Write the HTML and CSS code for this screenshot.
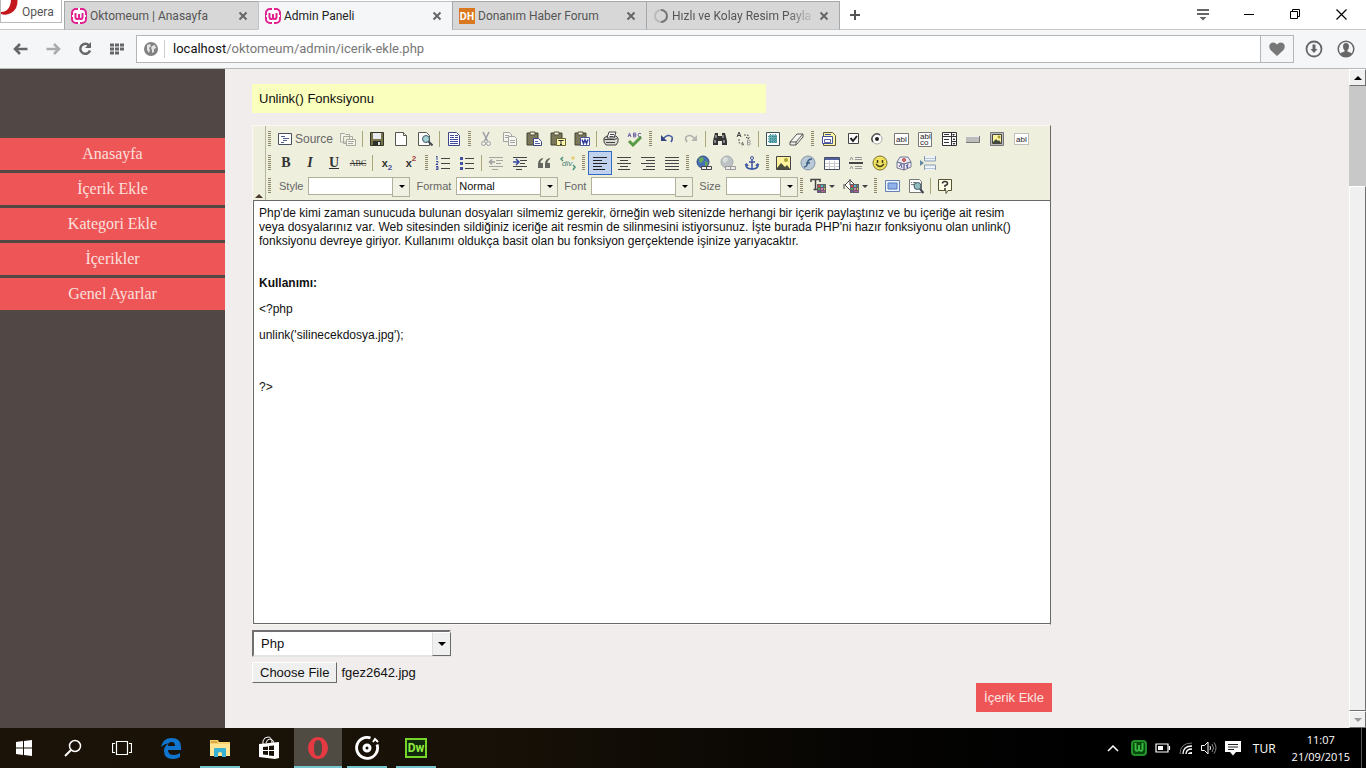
FILE: index.html
```html
<!DOCTYPE html>
<html lang="tr">
<head>
<meta charset="utf-8">
<title>Admin Paneli</title>
<link rel="stylesheet" href="styles.css">
</head>
<body>
<svg class="defs" aria-hidden="true">
  <symbol id="wamp" viewBox="0 0 16 16"><rect x="1" y="1" width="14" height="14" rx="4" fill="#fff" stroke="#e0218f" stroke-width="2"/><path d="M4.500 5v4q0 2 1.500 2h.5Q8 11 8 9V6v3q0 2 1.500 2h.5q1.500 0 1.500-2V5" fill="none" stroke="#e0218f" stroke-width="2"/><path d="M7 1h2M7 15h2M1 8h1M14 8h1" stroke="#fff" stroke-width="2"/></symbol>
  <symbol id="close" viewBox="0 0 10 10"><path d="M1.500 1.500l7 7M8.500 1.500l-7 7" stroke="#666" stroke-width="2"/></symbol>
  <symbol id="clip" viewBox="0 0 16 16"><path d="M1 2h11v12H1z" fill="#7b775a" stroke="#44432f"/><path d="M4 1h5v3H4z" fill="#eeeed8" stroke="#55533f"/></symbol>
  <symbol id="swatch" viewBox="0 0 9 9"><path d="M0 0h9v9H0z" fill="#63606c"/><path d="M1 1h2v2H1z" fill="#d84b42"/><path d="M4 1h2v2H4z" fill="#55b5c5"/><path d="M7 1h1v2H7zM1 4h2v2H1z" fill="#51a55b"/><path d="M4 4h2v2H4z" fill="#dc78aa"/><path d="M7 4h1v2H7z" fill="#ddc14c"/><path d="M1 7h2v1H1z" fill="#724eaa"/><path d="M4 7h4v1H4z" fill="#b05e98"/></symbol>
</svg>

<header class="browser">
  <div class="tabstrip">
    <button class="opera-menu"><svg width="18" height="16" viewBox="0 0 18 16"><path d="M10 0h6.500Q17 9 10 13Q5 16 0 14V12Q9 12 10 0z" fill="#c4161c"/></svg><span>Opera</span></button>
    <nav class="tabs">
      <div class="tab"><svg width="16" height="16"><use href="#wamp"/></svg><span class="tab-title">Oktomeum | Anasayfa</span><button aria-label="Kapat"><svg width="10" height="10"><use href="#close"/></svg></button></div>
      <div class="tab active"><svg width="16" height="16"><use href="#wamp"/></svg><span class="tab-title">Admin Paneli</span><button aria-label="Kapat"><svg width="10" height="10"><use href="#close"/></svg></button></div>
      <div class="tab"><span class="dh">DH</span><span class="tab-title">Donanım Haber Forum</span><button aria-label="Kapat"><svg width="10" height="10"><use href="#close"/></svg></button></div>
      <div class="tab"><svg width="16" height="16" viewBox="0 0 16 16"><circle cx="8" cy="8" r="6" fill="none" stroke="#bbb" stroke-width="2"/><path d="M8 2A6 6 0 0 1 8 14" fill="none" stroke="#777" stroke-width="2"/></svg><span class="tab-title fade">Hızlı ve Kolay Resim Payla</span><button aria-label="Kapat"><svg width="10" height="10"><use href="#close"/></svg></button></div>
    </nav>
    <button class="new-tab" aria-label="Yeni sekme"><svg width="12" height="12" viewBox="0 0 12 12"><path d="M6 1v10M1 6h10" stroke="#555" stroke-width="2"/></svg></button>
    <div class="window-controls">
      <button aria-label="Sekme menüsü"><svg width="14" height="14" viewBox="0 0 14 14"><path d="M1 3h12M1 7h12" stroke="#666" stroke-width="2"/><path d="M3.500 10h7L7 13.500z" fill="#666"/></svg></button>
      <button aria-label="Küçült"><svg width="11" height="11" viewBox="0 0 11 11"><path d="M0 5.500h10" stroke="#000"/></svg></button>
      <button aria-label="Geri yükle"><svg width="11" height="11" viewBox="0 0 11 11"><path d="M.5 2.500h7v7h-7zM2.500 2V.5h7v7H8" fill="none" stroke="#000"/></svg></button>
      <button aria-label="Kapat"><svg width="11" height="11" viewBox="0 0 11 11"><path d="M.5.5l10 10M10.500.5l-10 10" stroke="#000" stroke-width="1.200"/></svg></button>
    </div>
  </div>
  <div class="navbar">
    <div class="nav-buttons">
      <button aria-label="Geri"><svg width="16" height="14" viewBox="0 0 16 14"><path d="M2 7h12.500M7 2L2 7l5 5" fill="none" stroke="#666" stroke-width="2.500"/></svg></button>
      <button aria-label="İleri"><svg width="16" height="14" viewBox="0 0 16 14"><path d="M14 7H1.500M9 2l5 5-5 5" fill="none" stroke="#aaa" stroke-width="2.500"/></svg></button>
      <button aria-label="Yenile"><svg width="16" height="16" viewBox="0 0 16 16"><path d="M12 4.500A5 5 0 1 0 13 9.500" fill="none" stroke="#666" stroke-width="2.500"/><path d="M14 1v6H8z" fill="#666"/></svg></button>
      <button aria-label="Hızlı erişim"><svg width="16" height="12" viewBox="0 0 16 12"><path d="M1 2h14M1 6h14M1 10h9" stroke="#666" stroke-width="3" stroke-dasharray="4 1"/></svg></button>
    </div>
    <div class="address">
      <svg width="14" height="14" viewBox="0 0 14 14"><circle cx="7" cy="7" r="7" fill="#828282"/><path d="M3 3l3-1 1 2-2 2 1 2-1 3-2-3zM8 4l3-1 1 3-2 1v3l-2 1V8L7 6z" fill="#e5e5e5"/></svg>
      <span class="address-text">localhost<span>/oktomeum/admin/icerik-ekle.php</span></span>
      <button class="heart" aria-label="Favori"><svg width="16" height="14" viewBox="0 0 16 14"><path d="M8 14L1.500 8Q-1 4 1.500 1.500Q5-1 8 2.500Q11-1 14.500 1.500Q17 4 14.500 8z" fill="#777"/></svg></button>
    </div>
    <div class="nav-end">
      <button aria-label="İndirilenler"><svg width="18" height="18" viewBox="0 0 18 18"><circle cx="9" cy="9" r="7.500" fill="none" stroke="#666" stroke-width="1.800"/><path d="M7.500 4.500h3V9h2L9 13 5.500 9h2z" fill="#666"/></svg></button>
      <button aria-label="Hesap"><svg width="18" height="18" viewBox="0 0 18 18"><circle cx="9" cy="9" r="7.800" fill="none" stroke="#666" stroke-width="1.500"/><path d="M3 14q1-2 4.500-2.500V10Q6 9 6 6.500 6 3 9 3t3 3.500Q12 9 10.500 10v1.500Q14 12 15 14q-6 5-12 0z" fill="#666"/></svg></button>
    </div>
  </div>
</header>

<div class="page">
  <aside class="sidebar">
    <a href="#">Anasayfa</a><a href="#">İçerik Ekle</a><a href="#">Kategori Ekle</a><a href="#">İçerikler</a><a href="#">Genel Ayarlar</a>
  </aside>
  <main>
    <form class="content-form">
      <input class="title-input" type="text" value="Unlink() Fonksiyonu" aria-label="Başlık">
      <section class="editor">
        <div class="toolbar">
          <button type="button" class="collapse" aria-label="Araç çubuğunu kapat"></button>
          <div class="tool-rows">
            <div class="tool-row">
              <i class="handle"></i>
              <button type="button" class="source"><svg viewBox="0 0 16 16"><path d="M1.500 2.500h13v11h-13z" fill="#fff" stroke="#4a4f60"/><path d="M4 5.500h4M6 7.500h6M6 9.500h4M4 11.500h3" stroke="#53618a"/></svg><span>Source</span></button>
              <button type="button"><svg viewBox="0 0 16 16" fill="#f5f5ec" stroke="#aaa9a0"><path d="M.5 2.500V11h9V3.500h-4l-1-1zM3.500 5.500h9v7h-9z"/><path d="M6.500 8.500v6h9v-6z"/><path d="M8 10.500h6M8 12.500h5"/></svg></button>
              <i class="sep"></i>
              <button type="button"><svg viewBox="0 0 16 16"><path d="M1.500 1.500h13v13h-13z" fill="#77734a" stroke="#333526"/><path d="M4 2h8v6H4z" fill="#e9ecef"/><path d="M4 10h8v4H4z" fill="#2e302a"/><path d="M9 11h2v3H9z" fill="#ddd"/></svg></button>
              <button type="button"><svg viewBox="0 0 16 16"><path d="M2.500 1.500h8l3 3v10h-11z" fill="#fff" stroke="#56574e"/><path d="M10.500 1.500v3h3" fill="#ddd" stroke="#56574e"/></svg></button>
              <button type="button"><svg viewBox="0 0 16 16"><path d="M1.500 1.500h8l3 3v10h-11z" fill="#fff" stroke="#56574e"/><circle cx="9" cy="8" r="3.500" fill="#a4d3d5" stroke="#456"/><path d="M11.500 10.500l4 4" stroke="#454b50" stroke-width="2"/></svg></button>
              <i class="sep"></i>
              <button type="button"><svg viewBox="0 0 16 16"><path d="M2.500 1.500h8l3 3v10h-11z" fill="#fff" stroke="#3c448b"/><path d="M4 4.500h4M4 6.500h4M4 8.500h8M4 10.500h8M4 12.500h8M9 4.500h3M9 6.500h3" stroke="#3f49a0"/></svg></button>
              <i class="handle"></i>
              <button type="button"><svg viewBox="0 0 16 16" fill="none" stroke="#9a9da5"><path d="M5 1l4.500 9M11 1L6.500 10" stroke-width="1.500"/><circle cx="5.500" cy="12.500" r="2"/><circle cx="10.500" cy="12.500" r="2"/></svg></button>
              <button type="button"><svg viewBox="0 0 16 16" fill="#f6f6f0" stroke="#a3a49f"><path d="M1.500 1.500h6l2 2v7h-8z"/><path d="M3 4.500h4M3 6.500h4"/><path d="M6.500 5.500h6l2 2v7h-8z"/><path d="M8 9.500h5M8 11.500h5"/></svg></button>
              <button type="button"><svg viewBox="0 0 16 16"><use href="#clip"/><path d="M7.500 7.500h5l3 3v4h-8z" fill="#fff" stroke="#39468a"/><path d="M9 10.500h3M9 12.500h5" stroke="#5262a8"/></svg></button>
              <button type="button"><svg viewBox="0 0 16 16"><use href="#clip"/><path d="M6.500 7.500h9v7h-9z" fill="#fff8ab" stroke="#666536"/><path d="M8.500 10V9.500h5v.5M11 9.500v4M10 13.500h2" fill="none" stroke="#333"/></svg></button>
              <button type="button"><svg viewBox="0 0 16 16"><use href="#clip"/><path d="M6.500 6.500h9v8h-9z" fill="#fff" stroke="#4b5698"/><path d="M8 8.500l1.500 4L11 9l1.500 3.500 1.500-4" fill="none" stroke="#313e9a" stroke-width="1.500"/></svg></button>
              <i class="sep"></i>
              <button type="button"><svg viewBox="0 0 16 16" fill="#d8d8d0" stroke="#444"><path d="M1 7l3-2h9l2 2v4l-2 3H3l-2-3z"/><path d="M4 7l2-6h7l-2 6z" fill="#fff"/><path d="M1 8.500h10l3-1M3 11.500h9M7 3.500h4M6.500 5.500h4"/></svg></button>
              <button type="button"><svg viewBox="0 0 16 16" fill="none"><path d="M1 6l1.500-4L4 6M1.700 4.500h2M6.500 2v4h2q1-1 0-2h-2 2q1-1 0-2zM14 2.500Q11 1.500 11 4t3 1.500" stroke="#7063a9"/><path d="M2 10l4 4 8-8" stroke="#589b45" stroke-width="3"/></svg></button>
              <i class="handle"></i>
              <button type="button"><svg viewBox="0 0 16 16"><path d="M4 8Q9 2 13 6q1 2-1 5" fill="none" stroke="#455d9d" stroke-width="1.500"/><path d="M2 4v6h6z" fill="#32467f"/></svg></button>
              <button type="button"><svg viewBox="0 0 16 16"><path d="M12 8Q7 2 3 6q-1 2 1 5" fill="none" stroke="#afb0ae" stroke-width="1.500"/><path d="M14 4v6H8z" fill="#b5b6b2"/></svg></button>
              <i class="sep"></i>
              <button type="button"><svg viewBox="0 0 16 16"><path d="M3 2h3v3h4V2h3l2 8v4h-5v-4H6v4H1v-4z" fill="#353535"/><path d="M4 4v3M11 4v3M3 9v3M12 9v3" stroke="#ddd"/></svg></button>
              <button type="button"><svg viewBox="0 0 16 16" fill="none"><path d="M1 6l2-5 2 5M1.700 4.500h2.600" stroke="#444"/><path d="M11.500 9v5h2q2-1 0-2.500h-2 2q1.500-1 0-2.500z" stroke="#999"/><path d="M3 8v3q0 2 4 2M6 11l2 2-2 2M8 4h4v3M10 6l2 2 2-2" stroke="#555" stroke-dasharray="2 1"/></svg></button>
              <i class="sep"></i>
              <button type="button"><svg viewBox="0 0 16 16"><path d="M1.500 1.500h13v13h-13z" fill="#fff" stroke="#394e57"/><path d="M4 4h8v8H4z" fill="#69afb7"/><path d="M3 5.500h10M3 8h10M3 10.500h10M5.500 3v10M8 3v10M10.500 3v10" stroke="#3c8790" stroke-dasharray="1 1"/></svg></button>
              <button type="button"><svg viewBox="0 0 16 16" fill="#f5f5f0" stroke="#555"><path d="M1 11l7-8h6l-7 8zM1 11v3h6v-3M7 14l7-8V3"/></svg></button>
              <i class="handle"></i>
              <button type="button"><svg viewBox="0 0 16 16"><path d="M2.500 1.500h9l3 3v10h-12z" fill="#fff6a8" stroke="#5b593a"/><path d="M1.500 5.500h10v7h-10z" fill="#fff" stroke="#4350a2"/><path d="M3.500 8.500h6v3h-6z" fill="#fff" stroke="#5862a5"/><path d="M4 3.500h6" stroke="#4350a2"/></svg></button>
              <button type="button"><svg viewBox="0 0 16 16"><path d="M3.500 2.500h10v10h-10z" fill="#fff" stroke="#444"/><path d="M5.500 7l2.500 3 4-5" fill="none" stroke="#222" stroke-width="2"/></svg></button>
              <button type="button"><svg viewBox="0 0 16 16"><circle cx="8" cy="8" r="5" fill="#fff" stroke="#aaa"/><path d="M4 11A5 5 0 0 1 11 4" fill="none" stroke="#555" stroke-width="1.500"/><circle cx="8" cy="8" r="2" fill="#222"/></svg></button>
              <button type="button"><svg viewBox="0 0 16 16"><path d="M1.500 2.500h14v11h-14z" fill="#fff" stroke="#777"/><text class="glyph" x="3" y="11">abl</text></svg></button>
              <button type="button"><svg viewBox="0 0 16 16"><path d="M1.500 1.500h13v14h-13z" fill="#fff" stroke="#777"/><text class="glyph" x="3" y="8">abl</text><text class="glyph" x="3" y="14">co</text></svg></button>
              <button type="button"><svg viewBox="0 0 16 16"><path d="M1.500 1.500h14v13h-14z" fill="#fff" stroke="#333"/><path d="M1 5.500h14M10.500 2v12M3 3.500h5M3 8.500h5M3 11.500h5M11 10.500h4" stroke="#333"/><path d="M11 3h3l-1.500 2zM11.500 9L13 7l1.500 2zM11.500 12h3L13 14z" fill="#333"/></svg></button>
              <button type="button"><svg viewBox="0 0 16 16"><path d="M1 5h14v7H1z" fill="#bdbdbb"/><path d="M1 5.500h13" stroke="#eee"/><path d="M1 11.500h13.500V5" fill="none" stroke="#777"/></svg></button>
              <button type="button"><svg viewBox="0 0 16 16"><path d="M1.500 1.500h13v13h-13z" fill="#bbb" stroke="#777"/><path d="M3.500 3.500h9v9h-9z" fill="#fff4a1" stroke="#444"/><circle cx="10" cy="6" r="1.500" fill="#a39b36"/><path d="M4 11l3-3 2 2 1-1 2 3H4z" fill="#424a3a"/></svg></button>
              <button type="button"><svg viewBox="0 0 16 16"><path d="M1.500 2.500h14v11h-14z" fill="#fff" stroke="#888" stroke-dasharray="1 1"/><text class="glyph" x="3" y="11">abl</text></svg></button>
            </div>
            <div class="tool-row">
              <i class="handle"></i>
              <button type="button" class="letter bold">B</button><button type="button" class="letter italic">I</button><button type="button" class="letter underline">U</button><button type="button" class="letter strike">ABC</button>
              <i class="sep"></i>
              <button type="button" class="letter script">x<sub>2</sub></button><button type="button" class="letter script">x<sup>2</sup></button>
              <i class="handle"></i>
              <button type="button"><svg viewBox="0 0 16 16"><path d="M6 3.500h9M6 8.500h9M6 13.500h9" stroke="#444"/><path d="M1 2l1-1v4M1 6.500h2v1l-2 2h2M1 11.500h2v3H1M3 13H1" fill="none" stroke="#3d4c9c"/></svg></button>
              <button type="button"><svg viewBox="0 0 16 16"><path d="M6 3.500h9M6 8.500h9M6 13.500h9" stroke="#444"/><path d="M1 2h3v3H1zM1 7h3v3H1zM1 12h3v3H1z" fill="#4450a0"/></svg></button>
              <i class="sep"></i>
              <button type="button"><svg viewBox="0 0 16 16"><path d="M1 2.500h14M8 5.500h7M8 8.500h5M1 11.500h14M4 14.500h6" stroke="#a5a5a0"/><path d="M7 7H3M4 4.500L1.500 7 4 9.500" fill="none" stroke="#9a9b9e" stroke-width="1.500"/></svg></button>
              <button type="button"><svg viewBox="0 0 16 16"><path d="M1 2.500h14M8 5.500h7M8 8.500h5M1 11.500h14M4 14.500h6" stroke="#444"/><path d="M1 7h5M4 4l3 3-3 3" fill="none" stroke="#35489d" stroke-width="1.500"/></svg></button>
              <button type="button"><svg viewBox="0 0 16 16"><path d="M7 3Q2 4 2 9v4h5V8H4.500Q4 6 7 4zM14 3Q9 4 9 9v4h5V8h-2.500Q11 6 14 4z" fill="#65675f"/></svg></button>
              <button type="button"><svg viewBox="0 0 16 16"><path d="M3 2L1 4l2 2M13 10l2 2-2 3" fill="none" stroke="#4e927e" stroke-width="1.500"/><text class="glyph green" x="2" y="11">div</text><path d="M13 1v4M11 3h4" stroke="#e8c457"/></svg></button>
              <i class="handle"></i>
              <button type="button" class="pressed"><svg viewBox="0 0 16 16"><path d="M1 2.500h14M1 5.500h9M1 8.500h14M1 11.500h9M1 14.500h12" stroke="#222"/></svg></button>
              <button type="button"><svg viewBox="0 0 16 16"><path d="M1 2.500h14M4 5.500h8M1 8.500h14M4 11.500h8M2 14.500h12" stroke="#444"/></svg></button>
              <button type="button"><svg viewBox="0 0 16 16"><path d="M1 2.500h14M6 5.500h9M1 8.500h14M6 11.500h9M3 14.500h12" stroke="#444"/></svg></button>
              <button type="button"><svg viewBox="0 0 16 16"><path d="M1 2.500h14M1 5.500h14M1 8.500h14M1 11.500h14M1 14.500h14" stroke="#444"/></svg></button>
              <i class="handle"></i>
              <button type="button"><svg viewBox="0 0 16 16"><circle cx="7" cy="7" r="6" fill="#456fb7" stroke="#344e80"/><path d="M3 3l4-1 1 3-3 3-2-1zM9 6l3 1-1 4H9z" fill="#65a65b"/><path d="M5.500 11.500h5v3h-5zM10.500 11.500h5v3h-5z" fill="#eee" stroke="#444"/></svg></button>
              <button type="button"><svg viewBox="0 0 16 16"><circle cx="7" cy="7" r="6" fill="#bdc3c5" stroke="#a5abaf"/><path d="M3 3l4-1 1 3-3 3-2-1z" fill="#dadeda"/><path d="M5.500 11.500h5v3h-5zM10.500 11.500h5v3h-5z" fill="#eee" stroke="#999"/></svg></button>
              <button type="button"><svg viewBox="0 0 16 16" fill="none" stroke="#3d56a0"><circle cx="8" cy="3" r="1.500"/><path d="M8 5v10M5 7h6M2 9v2q1 3 6 3t6-3V9M1 10l1.500-1L4 11M12 11l1.500-2 1.500 1" stroke-width="1.500"/></svg></button>
              <i class="handle"></i>
              <button type="button"><svg viewBox="0 0 16 16"><path d="M.5 1.500h14v13H.5z" fill="#fff39b" stroke="#444"/><circle cx="10" cy="5" r="2" fill="#aaa33c"/><path d="M1 13l4-5 4 4 2-2 3 4H1z" fill="#4c503c"/></svg></button>
              <button type="button"><svg viewBox="0 0 16 16"><circle cx="8" cy="8" r="7" fill="#b9c9d8" stroke="#8294a5"/><path d="M12 4Q8 4 7.500 8T4 12M6 8h4" fill="none" stroke="#3f5e85" stroke-width="1.500"/></svg></button>
              <button type="button"><svg viewBox="0 0 16 16"><path d="M.5 2.500h15v12H.5z" fill="#fff" stroke="#444a60"/><path d="M1 3h14v2H1z" fill="#5361a3"/><path d="M1 8.500h14M1 11.500h14M5.500 6v8M10.500 6v8" stroke="#ccc"/></svg></button>
              <button type="button"><svg viewBox="0 0 16 16"><path d="M1 8h14" stroke="#444" stroke-width="2"/><path d="M7 2.500h7M7 4.500h7M7 11.500h7M7 13.500h7M2 5l1.500-3L5 5M2 14l1.500-3L5 14" fill="none" stroke="#999"/></svg></button>
              <button type="button"><svg viewBox="0 0 16 16"><circle cx="8" cy="8" r="7" fill="#f0e25c" stroke="#777130"/><path d="M5.500 5v3M10.500 5v3M4 9q4 5 8 0" fill="none" stroke="#443f20" stroke-width="1.500"/></svg></button>
              <button type="button"><svg viewBox="0 0 16 16" fill="#ecebf2" stroke="#777795"><path d="M1 7l3-5h8l3 5-7 2zM1 7v6l7 2V9zM8 9v6l7-3V7z"/><circle cx="8" cy="5" r="1.500" fill="#d5807d" stroke="#b44"/><path d="M3 12l2-3 1 4M10 10l2 3M12 9l-1 4" stroke="#5756a0"/></svg></button>
              <button type="button"><svg viewBox="0 0 16 16"><path d="M4.500 1v5h11V1M4.500 15v-5h11v5" fill="#edf3f7" stroke="#849bb1"/><path d="M5 3.500h10M5 13.500h10" stroke="#b5c7d7"/><path d="M0 5l4 3-4 3z" fill="#618ba7"/></svg></button>
            </div>
            <div class="tool-row combos">
              <i class="handle"></i>
              <label for="style">Style</label><span class="combo"><select id="style"><option></option></select></span>
              <label for="format">Format</label><span class="combo"><select id="format"><option>Normal</option></select></span>
              <label for="font">Font</label><span class="combo"><select id="font"><option></option></select></span>
              <label for="size">Size</label><span class="combo small"><select id="size"><option></option></select></span>
              <i class="handle"></i>
              <button type="button" class="color"><svg viewBox="0 0 16 16"><path d="M1 4V1.500h9V4M5.500 2v9M3.500 11.500h4" fill="none" stroke="#444" stroke-width="1.500"/><use href="#swatch" x="7" y="6" width="9" height="9"/></svg><span class="caret"></span></button>
              <button type="button" class="color"><svg viewBox="0 0 16 16"><path d="M2 7l5-5 5 5-5 5zM7 7V1M1 6v5" fill="#fff" stroke="#444"/><use href="#swatch" x="7" y="6" width="9" height="9"/></svg><span class="caret"></span></button>
              <i class="handle"></i>
              <button type="button"><svg viewBox="0 0 16 16"><path d="M1.500 2.500h14v11h-14z" fill="#edf3fc" stroke="#6681b8"/><path d="M4 5h9v6H4z" fill="#8fb2e8" stroke="#5479b9"/></svg></button>
              <button type="button"><svg viewBox="0 0 16 16"><path d="M1.500 1.500h10l2 2v11h-12z" fill="#fff" stroke="#777"/><path d="M3 4.500h1M5 4.500h3M3 6.500h3" stroke="#777"/><circle cx="9.500" cy="8" r="3.500" fill="#91bdbf" stroke="#456"/><path d="M12 11l3.500 4" stroke="#445" stroke-width="2"/></svg></button>
              <i class="sep"></i>
              <button type="button"><svg viewBox="0 0 16 16"><path d="M1.500 1.500h13v11H11l-2 3v-3H1.500z" fill="#fffee5" stroke="#555335"/><path d="M5.500 5.500Q5.500 3.500 8 3.500t2.500 2Q10.500 7 8 7.500V9M8 10v2" fill="none" stroke="#333" stroke-width="1.500"/></svg></button>
            </div>
          </div>
        </div>
        <div class="edit-area" contenteditable="true" spellcheck="false" role="textbox" aria-label="İçerik">
          <p class="lead">Php'de kimi zaman sunucuda bulunan dosyaları silmemiz gerekir, örneğin web sitenizde herhangi bir içerik paylaştınız ve bu içeriğe ait resim veya dosyalarınız var. Web sitesinden sildiğiniz iceriğe ait resmin de silinmesini istiyorsunuz. İşte burada PHP'ni hazır fonksiyonu olan unlink() fonksiyonu devreye giriyor. Kullanımı oldukça basit olan bu fonksiyon gerçektende işinize yarıyacaktır.</p>
          <p><strong>Kullanımı:</strong></p>
          <p>&lt;?php</p>
          <p>unlink('silinecekdosya.jpg');</p>
          <p>&nbsp;</p>
          <p>?&gt;</p>
        </div>
      </section>
      <span class="category"><select aria-label="Kategori"><option>Php</option></select></span>
      <div class="file-row"><input id="file" type="file"><label for="file">Choose File</label><span>fgez2642.jpg</span></div>
      <button type="button" class="submit">İçerik Ekle</button>
    </form>
  </main>
  <div class="scrollbar"><button aria-label="Yukarı"><span class="up"></span></button><div class="thumb"></div><button aria-label="Aşağı"><span class="down"></span></button></div>
</div>

<footer class="taskbar">
  <div class="apps">
    <button aria-label="Başlat"><svg width="16" height="16" viewBox="0 0 16 16" fill="#fff"><path d="M0 2l7-1v6.500H0zM8 1l8-1v7.500H8zM0 8.500h7V15l-7-1zM8 8.500h8V16l-8-1z"/></svg></button>
    <button aria-label="Ara"><svg width="18" height="18" viewBox="0 0 18 18" fill="none" stroke="#fff"><circle cx="11" cy="7" r="5.500" stroke-width="1.500"/><path d="M7 11l-6 6" stroke-width="2"/></svg></button>
    <button aria-label="Görev görünümü"><svg width="20" height="16" viewBox="0 0 20 16" fill="none" stroke="#fff" stroke-width="1.200"><path d="M4.500 1.500h11v13h-11zM3 3.500H.500v9H3M17 3.500h2.500v9H17"/></svg></button>
    <button aria-label="Edge"><svg width="22" height="22" viewBox="0 0 22 22"><path d="M1 10Q3 1 11.500 1 21 1 21 10v3H8q0 5 6 5 3 0 6-2v4q-3 2-7 2-9 0-9-8 0-5 5-8Q4 7 1 10zM8 9h7q0-4-3.500-4T8 9z" fill="#0f75cf"/></svg></button>
    <button class="running" aria-label="Dosya Gezgini"><svg width="22" height="20" viewBox="0 0 22 20"><path d="M1 2h8l1 2h11v14H1z" fill="#f7d16a"/><path d="M2 3h6l1 2H2z" fill="#dda64a"/><path d="M1 6h20v12H1z" fill="#ffe492"/><path d="M5 19v-8q0-1 1-1h10q1 0 1 1v8h-4v-4q-2-2-4 0v4z" fill="#38b2d4"/></svg></button>
    <button aria-label="Mağaza"><svg width="22" height="24" viewBox="0 0 22 24"><path d="M5 8V5q1-4 5-4t4 6M8 7q1-4 4-4t4 4" fill="none" stroke="#fff"/><path d="M1 8l20-2v16l-4 1-16-2z" fill="#fff"/><path d="M5 11l5-.5V14H5zM11 10l5-.5V14h-5zM5 15h5v4l-5-.5zM11 15h5v5l-5-.5z" fill="#171108"/></svg></button>
    <button class="running current" aria-label="Opera"><svg width="22" height="22" viewBox="0 0 22 22"><path fill-rule="evenodd" d="M11 0a10 11 0 1 0 0 22 10 11 0 1 0 0-22zM11 3q4 0 4 8t-4 8-4-8 4-8z" fill="#e63a42"/></svg></button>
    <button class="running" aria-label="Müzik"><svg width="24" height="24" viewBox="0 0 24 24" fill="none" stroke="#fff"><path d="M15.500 2A10.500 10.500 0 1 0 22 8.500" stroke-width="2.800"/><circle cx="12" cy="12" r="3" stroke-width="3"/><path d="M18 6l2-3 3 3" stroke-width="2"/></svg></button>
    <button class="running" aria-label="Dreamweaver"><span class="dw">Dw</span></button>
  </div>
  <div class="tray">
    <svg class="chevron" width="12" height="8" viewBox="0 0 12 8"><path d="M1 7l5-5 5 5" fill="none" stroke="#fff" stroke-width="1.500"/></svg>
    <svg width="16" height="16" viewBox="0 0 16 16"><rect x="1" y="1" width="14" height="14" rx="3" fill="#07480c" stroke="#22902a" stroke-width="2"/><path d="M4.500 3v6q0 3 3.500 1V5v5q3.500 2 3.500-1V3" fill="none" stroke="#39b940" stroke-width="2"/></svg>
    <svg width="16" height="10" viewBox="0 0 16 10"><path d="M1 1h12v8H1zM14.500 3v4" fill="none" stroke="#fff" stroke-width="1.200"/><path d="M3 3h5v4H3z" fill="#fff"/></svg>
    <svg width="14" height="14" viewBox="0 0 14 14" fill="none"><path d="M1 13Q1 2 13 2" stroke="#777"/><path d="M4 13q0-8 9-8M7 13q0-5 6-5" stroke="#fff" stroke-width="1.300"/><path d="M9 13q0-2 4-2v2z" fill="#fff"/></svg>
    <svg width="16" height="14" viewBox="0 0 16 14" fill="none" stroke="#fff"><path d="M.5 4.500h3L7 1v12L3.500 9.500h-3z"/><path d="M9 5q1 2 0 4"/><path d="M11 3q3 4 0 8M13 1.500q4 5 0 11" stroke="#888"/></svg>
    <svg width="16" height="16" viewBox="0 0 16 16"><path d="M0 1h16v11h-5l-3 3.500L5 12H0z" fill="#fff"/><path d="M3 4.500h10M3 7h10M3 9.500h6" stroke="#222"/></svg>
    <span class="lang">TUR</span>
    <time class="clock"><span>11:07</span><span>21/09/2015</span></time>
    <i class="desktop-edge"></i>
  </div>
</footer>
</body>
</html>
```

FILE: styles.css
```css
* { box-sizing: border-box; }
body { margin: 0; min-height: 100vh; display: flex; flex-direction: column; background: #f0edec; font-family: "Liberation Sans", Arial, sans-serif; color: #111; }
button { border: 0; padding: 0; margin: 0; background: none; font: inherit; color: inherit; display: flex; align-items: center; justify-content: center; }
svg { display: block; flex: none; }
.defs { width: 0; height: 0; position: absolute; }

/* Browser frame */
.browser { font-family: Roboto, "Noto Sans", sans-serif; font-size: 12px; color: #555; }
.tabstrip { display: flex; height: 30px; background: #fff; border-bottom: 1px solid #c4c5c7; }
.opera-menu { width: 62px; height: 23px; border: 1px solid #bbb; border-top: 0; gap: 3px; align-items: flex-start; justify-content: flex-start; background: #fff; }
.opera-menu span { line-height: 24px; }
.tabs { display: flex; padding: 1px 0 0 2px; }
.tab { display: flex; align-items: center; width: 194px; height: 29px; padding: 1px 10px 0 6px; gap: 3px; background: #d7d7d7; border: 1px solid #a5a8aa; border-width: 1px 0 1px 1px; border-bottom-color: #c4c5c7; }
.tab:last-child { border-right-width: 1px; }
.tab.active { background: #f4f6f8; border-color: #c0c3c5; border-bottom-color: #f4f6f8; color: #222; }
.tab-title { flex: 1; min-width: 0; overflow: hidden; white-space: nowrap; }
.fade { mask-image: linear-gradient(90deg, #000 80%, transparent); }
.dh { width: 16px; height: 16px; background: #d9781e; color: #fff; font: bold 10px/16px "Open Sans", sans-serif; text-align: center; }
.new-tab { width: 30px; height: 30px; }
.window-controls { display: flex; margin-left: auto; height: 28px; padding-right: 2px; }
.window-controls button { width: 46px; }
.navbar { display: flex; align-items: center; height: 39px; background: #f4f6f8; border-bottom: 1px solid #b7b9bb; padding-right: 4px; }
.nav-buttons { display: flex; padding-left: 5px; width: 136px; flex: none; }
.nav-buttons button { width: 32px; height: 28px; }
.address { flex: 1; display: flex; align-items: center; height: 28px; border: 1px solid #b3b5b7; background: #fff; padding-left: 7px; }
.address-text { flex: 1; margin-left: 6px; padding-left: 8px; border-left: 1px solid #ccc; font-size: 13px; line-height: 18px; color: #111; }
.address-text span { color: #777; }
.heart { width: 33px; height: 26px; border-left: 1px solid #b3b5b7; background: #f4f6f8; }
.nav-end { display: flex; padding-left: 4px; }
.nav-end button { width: 32px; height: 28px; }

/* Page */
.page { flex: 1; display: flex; }
.sidebar { width: 225px; flex: none; background: #514745; padding-top: 69px; display: flex; flex-direction: column; gap: 3px; }
.sidebar a { height: 32px; background: #ee5557; color: #fbe0de; text-align: center; text-decoration: none; font: 16px/32px "Liberation Serif", "Times New Roman", serif; }
main { flex: 1; min-width: 0; padding: 15px 27px; }
.content-form { max-width: 800px; display: flex; flex-direction: column; align-items: flex-start; font-size: 13px; }
.title-input { width: 514px; height: 29px; border: 0; padding: 0 7px; background: #faffbd; color: #111; font: 13px "Liberation Sans", Arial, sans-serif; }
.editor { width: 100%; max-width: 799px; margin-top: 12px; border: 1px solid #f8f7f2; border-right-color: #696969; }
.toolbar { display: flex; height: 74px; background: #efefde; }
.collapse { width: 13px; border-right: 1px solid #b5b5a0; align-items: flex-end; padding-bottom: 2px; }
.collapse::after { content: ""; border: 4px solid transparent; border-top: 0; border-bottom-color: #4d3a31; }
.tool-rows { flex: 1; padding-top: 1px; color: #666; font-size: 12px; }
.tool-row { display: flex; align-items: center; height: 24px; }
.tool-row button { width: 24px; height: 24px; flex: none; }
.tool-row svg { width: 16px; height: 16px; }
.handle { width: 8px; height: 16px; flex: none; padding: 0 3px 0 2px; background: repeating-linear-gradient(#8d8768 0 1px, transparent 1px 2px) content-box; }
.sep { width: 5px; height: 16px; flex: none; padding: 0 2px; background: #aaa879 content-box; }
.tool-row .source { width: 62px; gap: 2px; }
.glyph { font: 8px "Liberation Sans", Arial, sans-serif; fill: #222; }
.green { fill: #3f8172; font-style: italic; }
.tool-row .letter { color: #333; font: bold 14px "Liberation Serif", serif; }
.tool-row .italic { font-style: italic; }
.tool-row .underline { text-decoration: underline; }
.tool-row .strike { font-size: 8px; font-weight: normal; text-decoration: line-through; }
.tool-row .script { font-family: "Liberation Sans", Arial, sans-serif; font-size: 11px; }
.script sub { color: #4450a0; font-size: 8px; align-self: flex-end; padding-bottom: 3px; }
.script sup { color: #a03c3c; font-size: 8px; align-self: flex-start; padding-top: 3px; }
.tool-row .pressed { background: #c1d2ee; border: 1px solid #316ac5; }
.combos { height: 22px; }
.combos label { margin: 0 5px 0 6px; font-size: 11px; }
.combos .handle + label { margin-left: 5px; }
.combo, .category { position: relative; display: block; }
.combo { width: 102px; height: 18px; }
.combo.small { width: 72px; }
.combo select { appearance: none; display: block; width: 100%; height: 18px; border: 1px solid #b0b09b; border-radius: 0; padding: 0 18px 0 2px; background: #fff; font: 11px "Liberation Sans", Arial, sans-serif; color: #111; }
.combo::after { content: ""; position: absolute; right: 5px; top: 8px; border: 3px solid transparent; border-bottom: 0; border-top-color: #000; pointer-events: none; }
.combo::before { content: ""; position: absolute; right: 0; top: 0; width: 16px; height: 18px; border: 1px solid #b0b09b; background: #f1f1e3; pointer-events: none; }
.tool-row .color { width: 33px; gap: 3px; }
.caret { border: 3px solid transparent; border-bottom: 0; border-top-color: #444; }
.edit-area { min-height: 424px; padding: 5px 24px 5px 5px; border: 1px solid #696969; border-right: 0; background: #fff; font-size: 12px; line-height: 14px; outline: 0; }
.edit-area p { margin: 0 0 12px; }
.edit-area .lead { margin-bottom: 28px; }
.category { width: 199px; margin-top: 5px; }
.category select { appearance: none; display: block; width: 100%; height: 27px; padding: 0 24px 0 7px; border: 2px solid; border-color: #707070 #e4e4e4 #e4e4e4 #707070; border-radius: 0; background: #fff; color: #111; font: 13px "Liberation Sans", Arial, sans-serif; }
.category::before { content: ""; position: absolute; right: 0; top: 2px; bottom: 1px; width: 17px; background: #f0f0f0; border: 1px solid; border-color: #fff #696969 #696969 #ddd; pointer-events: none; }
.category::after { content: ""; position: absolute; right: 5px; top: 12px; border: 4px solid transparent; border-bottom: 0; border-top-color: #000; pointer-events: none; }
.file-row { display: flex; align-items: center; gap: 4px; margin-top: 5px; }
.file-row input { position: absolute; width: 1px; height: 1px; opacity: 0; }
.file-row label { height: 21px; padding: 0 7px; line-height: 19px; border: 1px solid; border-color: #fff #696969 #696969 #fff; background: #efefef; }
.submit { align-self: flex-end; height: 29px; padding: 0 8px; background: #ee5557; color: #fbe6e4; }
.scrollbar { width: 17px; flex: none; display: flex; flex-direction: column; background: #c8c8c8; }
.scrollbar button, .thumb { border: 1px solid; border-color: #fff #707070 #707070 #fff; background: #f0f0f0; }
.scrollbar button { height: 17px; }
.thumb { flex: 1; margin-top: 100px; }
.up { border: 4px solid transparent; border-top: 0; border-bottom-color: #000; }
.down { border: 4px solid transparent; border-bottom: 0; border-top-color: #999; }

/* Taskbar */
.taskbar { display: flex; justify-content: space-between; height: 40px; background: linear-gradient(90deg, #1b1307 0, #181107 35%, #050403 65%, #000 80%); color: #fff; font: 12px/17px "Open Sans", sans-serif; }
.apps { display: flex; gap: 1px; }
.apps button { width: 48px; }
.running { position: relative; }
.running::after { content: ""; position: absolute; left: 4px; right: 4px; bottom: 0; height: 2px; background: #76c5cc; }
.current { background: #4f4a42; }
.current::after { left: 0; right: 0; }
.dw { width: 22px; height: 20px; border: 2px solid #77d42a; background: #10280b; color: #92ec3d; font: bold 12px/16px Roboto, sans-serif; text-align: center; }
.tray { display: flex; align-items: center; gap: 8px; }
.chevron { margin-right: 4px; }
.lang { margin: 0 8px 0 4px; }
.clock { display: flex; flex-direction: column; align-items: center; font-size: 11px; margin-right: 3px; }
.desktop-edge { width: 5px; height: 40px; border-left: 1px solid #555; }
```
